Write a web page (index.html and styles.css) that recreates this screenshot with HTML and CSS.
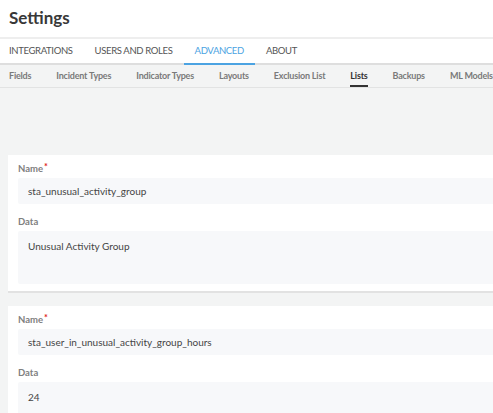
FILE: index.html
```html
<!DOCTYPE html>
<html>
<head>
    <title>Settings</title>
    <link rel="stylesheet" href="styles.css">
</head>
<body>
    <div class="page-header">
        <h1>Settings</h1>
    </div>

    <!-- main tabs -->
    <div class="tabs">
        <div class="tab">INTEGRATIONS</div>
        <div class="tab">USERS AND ROLES</div>
        <div class="tab active">ADVANCED</div>
        <div class="tab">ABOUT</div>
    </div>

    <!-- sub tabs -->
    <div class="subtabs">
        <div class="subtab">Fields</div>
        <div class="subtab">Incident Types</div>
        <div class="subtab">Indicator Types</div>
        <div class="subtab">Layouts</div>
        <div class="subtab">Exclusion List</div>
        <div class="subtab active">Lists</div>
        <div class="subtab">Backups</div>
        <div class="subtab">ML Models</div>
    </div>

    <div class="content">
        <div class="card">
            <div class="field">
                <label class="field-label">Name<span class="required">*</span></label>
                <div class="input">sta_unusual_activity_group</div>
            </div>
            <div class="field">
                <label class="field-label">Data</label>
                <div class="input textarea">Unusual Activity Group</div>
            </div>
        </div>

        <div class="card">
            <div class="field">
                <label class="field-label">Name<span class="required">*</span></label>
                <div class="input">sta_user_in_unusual_activity_group_hours</div>
            </div>
            <div class="field">
                <label class="field-label">Data</label>
                <div class="input textarea">24</div>
            </div>
        </div>
    </div>
</body>
</html>
```

FILE: styles.css
```css
body {
    margin: 0;
    font-family: "Lato", "Noto Sans", sans-serif;
    background-color: #f3f4f4;
    overflow: hidden;
    color: #444;
}

.page-header {
    background-color: #fff;
    height: 37px;
    border-bottom: 2px solid #eeeeee;
    padding-left: 9px;
}

h1 {
    margin: 0;
    padding-top: 7px;
    font-size: 17px;
    line-height: 22px;
    font-weight: 700;
    color: #383838;
}

/* 主分頁 */
.tabs {
    display: flex;
    background-color: #fff;
    height: 24px;
    border-bottom: 2px solid #dedede;
}

.tab {
    padding: 0 11px;
    font-size: 9.5px;
    letter-spacing: -0.35px;
    line-height: 24px;
    color: #555;
    white-space: nowrap;
}

.tab:first-child {
    padding-left: 9px;
}

.tab.active {
    color: #4ba3e2;
    box-shadow: inset 0 -2px 0 #4ba3e2;
    margin-bottom: -2px;
    height: 26px;
    box-sizing: border-box;
}

/* 子分頁 */
.subtabs {
    display: flex;
    gap: 25px;
    padding-left: 9px;
    height: 22px;
    border-bottom: 1px solid #e2e3e3;
}

.subtab {
    font-size: 9px;
    font-weight: 700;
    letter-spacing: -0.2px;
    line-height: 22px;
    color: #7a7a7a;
    white-space: nowrap;
    flex-shrink: 0;
}

.subtab.active {
    color: #333;
    box-shadow: inset 0 -2px 0 #333;
}

.content {
    padding: 67px 0 0 8px;
}

.card {
    background-color: #fff;
    margin-right: -40px;
    margin-bottom: 15px;
    padding: 7px 10px 7px 10px;
    box-shadow: 0 2px 0 #e2e2e2;
}

.field + .field {
    margin-top: 11px;
}

.field-label {
    display: block;
    font-size: 9.5px;
    font-weight: 700;
    line-height: 14px;
    color: #808080;
    margin-bottom: 2px;
}

.required {
    color: #e02020;
    font-size: 9px;
    vertical-align: top;
    line-height: 10px;
    margin-left: 1px;
}

.input {
    background-color: #f7f8fa;
    height: 26px;
    line-height: 26px;
    padding-left: 10px;
    font-size: 10px;
    color: #444;
    border-radius: 2px;
}

.textarea {
    height: 53px;
    line-height: 14px;
    padding-top: 8px;
    box-sizing: border-box;
}
```
